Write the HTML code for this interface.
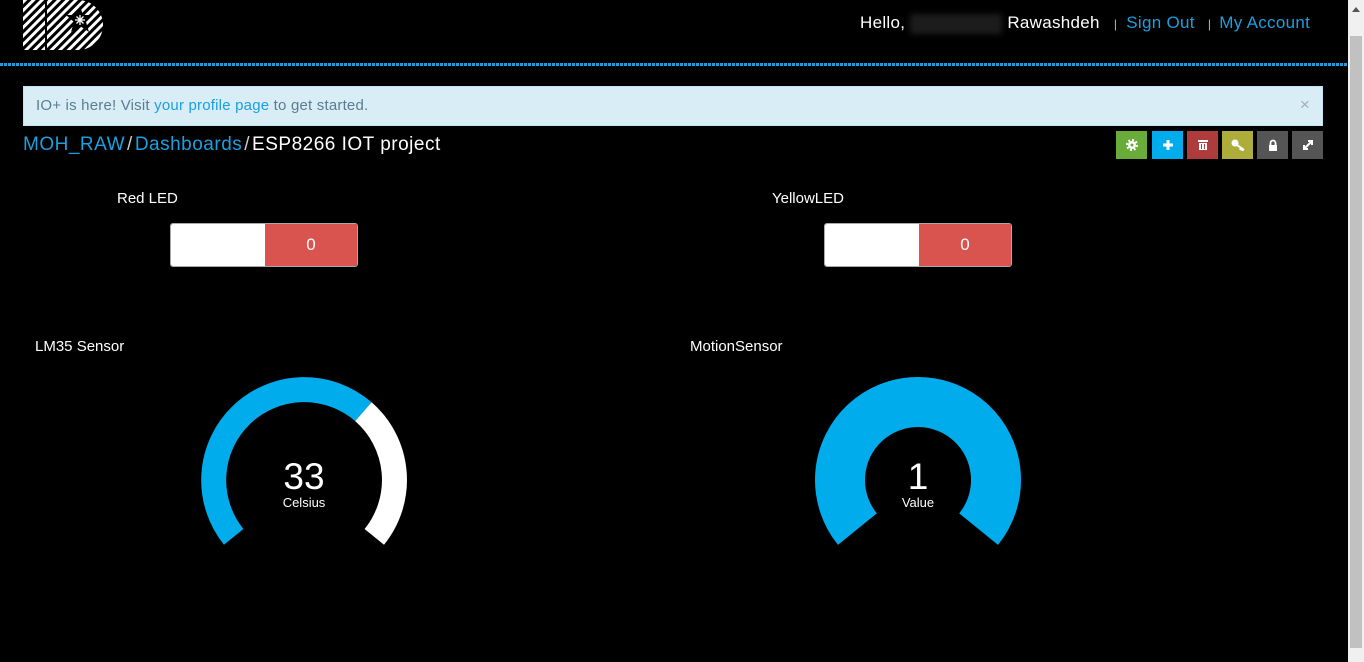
<!DOCTYPE html>
<html><head><meta charset="utf-8"><style>
*{margin:0;padding:0;box-sizing:border-box}
body{width:1364px;height:662px;background:#000;font-family:"Liberation Sans",sans-serif;color:#fff;position:relative;overflow:hidden}
.abs{position:absolute}
a{color:#1a9fe0;text-decoration:none}
.sb{left:1348px;top:0;width:16px;height:662px;background:#f0f0f0}
.sb .th{position:absolute;left:2px;top:36px;width:12px;height:612px;background:#c1c1c1}
.dots{left:0;top:63px;width:1348px;height:3px;background:repeating-linear-gradient(90deg,#1a9fe0 0 3px,transparent 3px 4px)}
.alert{left:23px;top:86px;width:1300px;height:40px;background:#d9edf7;border:1px solid #bce8f1;color:#5a7d90;font-size:15px;padding:10px 12px;letter-spacing:0.2px}
.btn{top:131px;width:31px;height:28px;display:flex;align-items:center;justify-content:center}
.tog{top:223px;width:188px;height:44px;border:1px solid #aaa;border-radius:3px;overflow:hidden;display:flex}
.tog .w{width:94px;background:#fff}
.tog .r{flex:1;background:#d9534f;color:#fff;font-size:17px;display:flex;align-items:center;justify-content:center}
.lbl{font-size:15px}
</style></head><body>
<svg class="abs" style="left:23px;top:0" width="80" height="50" viewBox="0 0 80 50">
<defs><pattern id="st" width="6" height="6" patternUnits="userSpaceOnUse" patternTransform="rotate(45)"><rect width="3" height="6" fill="#fff"/></pattern>
<mask id="m"><rect x="0" y="0" width="22" height="50" fill="#fff"/><path d="M24 0H55A25 25 0 0 1 55 50H24Z" fill="#fff"/><path d="M57 6l3 9 10 0-7 7 3 10-9-6-9 6 3-10-8-7 10 0z" fill="#000"/></mask></defs>
<rect width="80" height="50" fill="url(#st)" mask="url(#m)"/>
<g stroke="#fff" stroke-width="1.3"><line x1="57" y1="15" x2="57" y2="25"/><line x1="52" y1="20" x2="62" y2="20"/><line x1="53.5" y1="16.5" x2="60.5" y2="23.5"/><line x1="60.5" y1="16.5" x2="53.5" y2="23.5"/></g>
</svg>
<div class="abs" style="left:860px;top:13px;font-size:17px;letter-spacing:0.3px;white-space:nowrap">Hello, <span style="display:inline-block;width:92px;height:20px;background:#1c1c1c;vertical-align:middle;filter:blur(3px)"></span> Rawashdeh <span style="color:#f0ad4e;font-size:12px;margin:0 9px">|</span><a>Sign Out</a> <span style="color:#f0ad4e;font-size:12px;margin:0 8px">|</span><a>My Account</a></div>
<div class="abs sb"><div class="th"></div><div style="position:absolute;left:4px;top:7px;border:4px solid transparent;border-bottom:5px solid #555;border-top:0"></div></div>
<div class="abs dots"></div>
<div class="abs alert">IO+ is here! Visit <a style="color:#1a9fe0">your profile page</a> to get started.<span style="position:absolute;right:12px;top:8px;color:#aab;font-size:17px">×</span></div>
<div class="abs" style="left:23px;top:134px;font-size:19px;letter-spacing:0.5px;white-space:nowrap"><a>MOH_RAW</a><span style="color:#ccc;margin:0 2px">/</span><a>Dashboards</a><span style="color:#ccc;margin:0 2px">/</span>ESP8266 IOT project</div>
<div class="abs btn" style="left:1116px;background:#6aac3a"><svg width="12" height="12" viewBox="0 0 12 12"><circle cx="6" cy="6" r="4" fill="#fff"/><circle cx="6" cy="6" r="5" fill="none" stroke="#fff" stroke-width="2" stroke-dasharray="2 1.9"/><circle cx="6" cy="6" r="1.5" fill="#6aac3a"/></svg></div>
<div class="abs btn" style="left:1152px;background:#00acec"><svg width="12" height="12"><path d="M6 1v10M1 6h10" stroke="#fff" stroke-width="3"/></svg></div>
<div class="abs btn" style="left:1187px;background:#ae3c3c"><svg width="12" height="12"><rect x="1" y="1" width="10" height="2" fill="#fff"/><path d="M2 4h8v7H2z" fill="#fff"/><path d="M4.5 5v5M7.5 5v5" stroke="#ae3c3c"/></svg></div>
<div class="abs btn" style="left:1222px;background:#aead3c"><svg width="14" height="12"><circle cx="4" cy="4" r="3.5" fill="#fff"/><path d="M6 6l7 5M10 9l-1 2M12 10.5l-1 1.5" stroke="#fff" stroke-width="2"/></svg></div>
<div class="abs btn" style="left:1257px;background:#555"><svg width="12" height="12"><path d="M3.5 6V4a2.5 2.5 0 0 1 5 0v2" stroke="#fff" stroke-width="1.8" fill="none"/><rect x="2" y="6" width="8" height="6" fill="#fff"/></svg></div>
<div class="abs btn" style="left:1292px;background:#555"><svg width="12" height="12"><path d="M2 10L10 2M6 2h4v4M2 6v4h4" stroke="#fff" stroke-width="2" fill="none"/></svg></div>
<div class="abs lbl" style="left:117px;top:190px">Red LED</div>
<div class="abs tog" style="left:170px"><div class="w"></div><div class="r">0</div></div>
<div class="abs lbl" style="left:772px;top:190px">YellowLED</div>
<div class="abs tog" style="left:824px"><div class="w"></div><div class="r">0</div></div>
<div class="abs lbl" style="left:35px;top:338px">LM35 Sensor</div>
<div class="abs lbl" style="left:690px;top:338px">MotionSensor</div>
<svg class="abs" style="left:0;top:0" width="1348" height="662">
<path d="M233.7 536.9A90.5 90.5 0 0 1 363.4 411.7" stroke="#00acec" stroke-width="25" fill="none"/>
<path d="M363.4 411.7A90.5 90.5 0 0 1 374.3 536.9" stroke="#fff" stroke-width="25" fill="none"/>
<path d="M857.4 529.1A78 78 0 1 1 978.6 529.1" stroke="#00acec" stroke-width="50" fill="none"/>
<g font-family="Liberation Sans,sans-serif" fill="#fff" text-anchor="middle">
<text x="304" y="489" font-size="37" font-weight="300">33</text><text x="304" y="507" font-size="13">Celsius</text>
<text x="918" y="489" font-size="37" font-weight="300">1</text><text x="918" y="507" font-size="13">Value</text>
</g></svg>
</body></html>
